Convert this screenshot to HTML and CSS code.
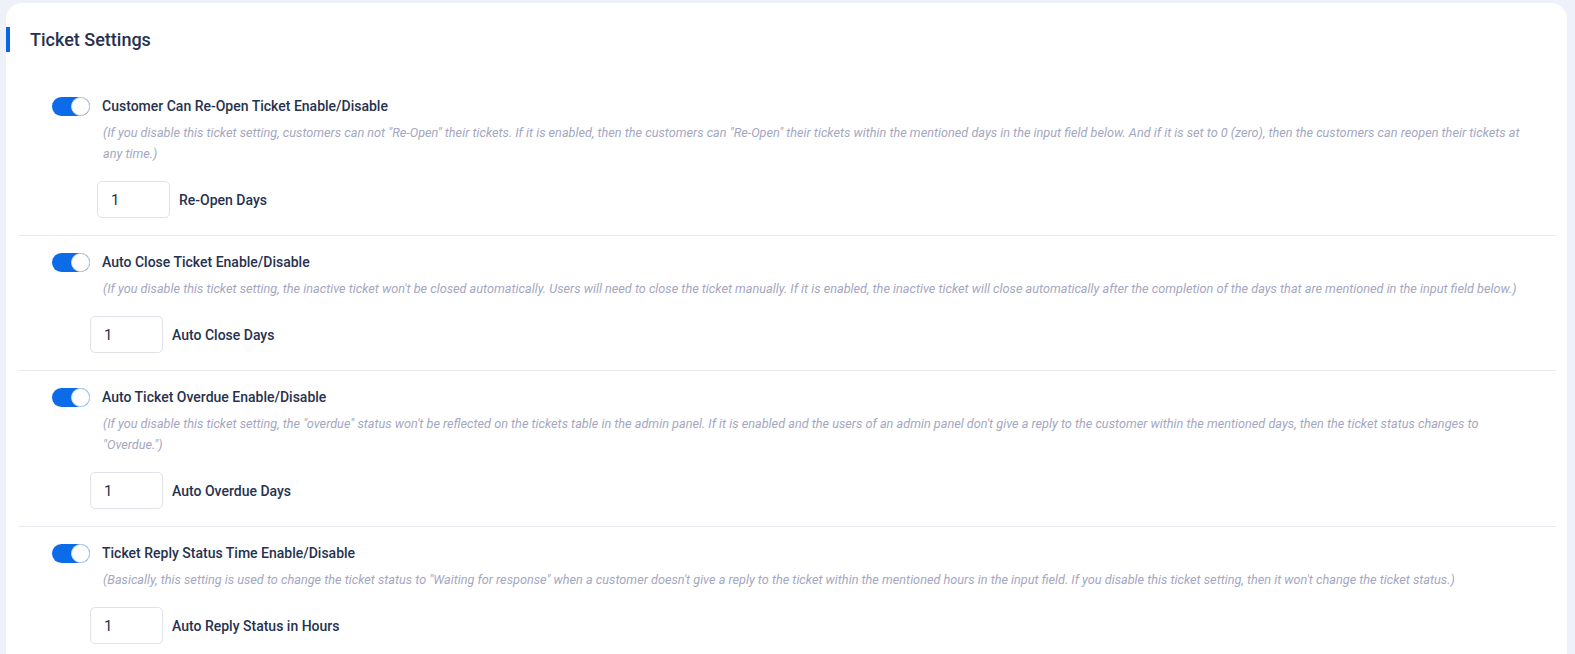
FILE: index.html
```html
<!DOCTYPE html>
<html lang="en">
  <head>
    <meta charset="UTF-8" />
    <meta name="viewport" content="width=device-width, initial-scale=1.0" />
    <title>Ticket Settings</title>
    <link rel="stylesheet" href="styles.css">
  </head>
  <body>
    <div class="card">
      <div class="card-header">
        <h1 class="card-title">Ticket Settings</h1>
      </div>

      <div class="settings">
        <section class="setting">
          <div class="setting-head">
            <span class="switch"></span>
            <h3>Customer Can Re-Open Ticket Enable/Disable</h3>
          </div>
          <p class="desc">(If you disable this ticket setting, customers can not "Re-Open" their tickets. If it is enabled, then the customers can "Re-Open" their tickets within the mentioned days in the input field below. And if it is set to 0 (zero), then the customers can reopen their tickets at any time.)</p>
          <div class="field field-wide">
            <input type="text" value="1" />
            <label>Re-Open Days</label>
          </div>
        </section>

        <section class="setting">
          <div class="setting-head">
            <span class="switch"></span>
            <h3>Auto Close Ticket Enable/Disable</h3>
          </div>
          <p class="desc">(If you disable this ticket setting, the inactive ticket won't be closed automatically. Users will need to close the ticket manually. If it is enabled, the inactive ticket will close automatically after the completion of the days that are mentioned in the input field below.)</p>
          <div class="field">
            <input type="text" value="1" />
            <label>Auto Close Days</label>
          </div>
        </section>

        <section class="setting">
          <div class="setting-head">
            <span class="switch"></span>
            <h3>Auto Ticket Overdue Enable/Disable</h3>
          </div>
          <p class="desc">(If you disable this ticket setting, the "overdue" status won't be reflected on the tickets table in the admin panel. If it is enabled and the users of an admin panel don't give a reply to the customer within the mentioned days, then the ticket status changes to "Overdue.")</p>
          <div class="field">
            <input type="text" value="1" />
            <label>Auto Overdue Days</label>
          </div>
        </section>

        <section class="setting">
          <div class="setting-head">
            <span class="switch"></span>
            <h3>Ticket Reply Status Time Enable/Disable</h3>
          </div>
          <p class="desc">(Basically, this setting is used to change the ticket status to "Waiting for response" when a customer doesn't give a reply to the ticket within the mentioned hours in the input field. If you disable this ticket setting, then it won't change the ticket status.)</p>
          <div class="field">
            <input type="text" value="1" />
            <label>Auto Reply Status in Hours</label>
          </div>
        </section>
      </div>
    </div>
  </body>
</html>
```

FILE: styles.css
```css
body {
  margin: 0;
  padding: 3px 8px 0 6px;
  background: #eef1f9;
  font-family: Roboto, "Liberation Sans", sans-serif;
  color: #1f2a4b;
}

.card {
  background: #fff;
  border-radius: 16px 16px 0 0;
  min-height: 700px;
}

.card-header {
  padding: 24px 0 0 0;
  height: 53px;
}

.card-title {
  margin: 0;
  padding-left: 20px;
  border-left: 4px solid #0b66e4;
  font-size: 18px;
  font-weight: 500;
  line-height: 25px;
  color: #26314f;
}

.settings {
  padding: 0 11px 0 12px;
}

.setting {
  padding: 16px 36px 17px 0;
  border-bottom: 1px solid #e8eaf0;
}

.setting-head {
  display: flex;
  align-items: center;
  gap: 12px;
  margin-left: 34px;
  height: 20px;
}

.setting-head h3 {
  margin: 0;
  font-size: 14px;
  font-weight: 500;
  color: #27324f;
}

.switch {
  position: relative;
  width: 38px;
  height: 19px;
  border-radius: 10px;
  background: #0b6be8;
  flex-shrink: 0;
}

.switch::after {
  content: "";
  position: absolute;
  top: 0;
  right: 0;
  width: 17px;
  height: 17px;
  border-radius: 50%;
  background: #fff;
  border: 1px solid #cdd6e4;
}

.desc {
  margin: 6px 0 0 85px;
  font-size: 12.7px;
  font-style: italic;
  line-height: 21px;
  color: #a4a7c1;
}

.field {
  display: flex;
  align-items: center;
  gap: 9px;
  margin: 17px 0 0 72px;
}

.field-wide {
  margin-left: 79px;
}

.field input {
  width: 73px;
  height: 37px;
  box-sizing: border-box;
  border: 1px solid #dfe2ea;
  border-radius: 5px;
  padding: 0 13px;
  font-family: inherit;
  font-size: 15px;
  color: #27324f;
}

.field label {
  font-size: 14px;
  font-weight: 500;
  color: #27324f;
}
```
